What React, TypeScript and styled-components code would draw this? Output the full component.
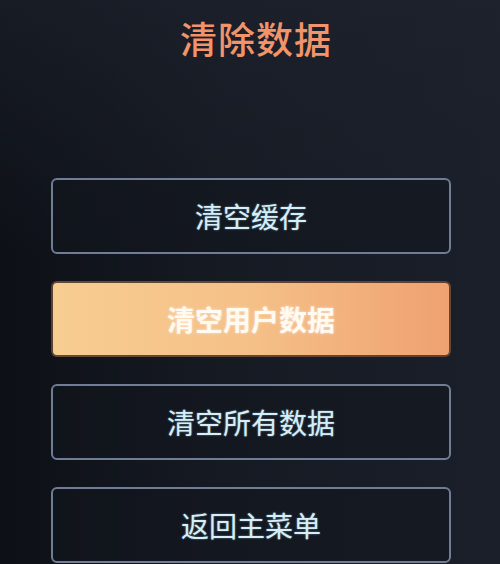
import React from 'react';
import styled, { createGlobalStyle } from 'styled-components';

const GlobalStyle = createGlobalStyle`
  html, body {
    margin: 0;
    padding: 0;
    background: #161a23;
  }
  body {
    font-family: "Noto Sans CJK SC", "Noto Sans", sans-serif;
  }
`;

const Screen = styled.div`
  width: 500px;
  height: 564px;
  overflow: hidden;
  display: flex;
  flex-direction: column;
  align-items: center;
  background:
    linear-gradient(180deg, rgba(30, 35, 46, 0.6) 0%, transparent 45%),
    linear-gradient(90deg, #0d1016 0%, #161a23 45%, #1b1f2a 100%);
`;

const Title = styled.h1`
  margin: 12px 0 0 12px;
  font-size: 37px;
  font-weight: 500;
  line-height: 52px;
  letter-spacing: 1px;
  color: #f2946a;
`;

const Menu = styled.div`
  margin-top: 114px;
  display: flex;
  flex-direction: column;
  gap: 27px;
  width: 400px;
  margin-left: 2px;
`;

const MenuButton = styled.div<{ $active?: boolean }>`
  height: 76px;
  box-sizing: border-box;
  display: flex;
  align-items: center;
  justify-content: center;
  border-radius: 6px;
  font-size: 28px;
  line-height: 1;
  border: 2px solid ${(p) => (p.$active ? 'rgba(60, 40, 30, 0.8)' : '#6f7d96')};
  background: ${(p) =>
    p.$active
      ? 'linear-gradient(90deg, #f7cd92 0%, #f5c088 50%, #efa172 100%)'
      : 'rgba(18, 22, 30, 0.55)'};
  color: ${(p) => (p.$active ? '#fffaf2' : '#d6eef7')};
  font-weight: ${(p) => (p.$active ? 700 : 400)};
  text-shadow: ${(p) => (p.$active ? '0 0 3px rgba(255, 255, 255, 0.6)' : '0 0 2px rgba(170, 225, 245, 0.6)')};
`;

const items = ['清空缓存', '清空用户数据', '清空所有数据', '返回主菜单'];

export default function App() {
  return (
    <>
      <GlobalStyle />
      <Screen>
        <Title>清除数据</Title>
        <Menu>
          {items.map((label, i) => (
            <MenuButton key={label} $active={i === 1}>
              {label}
            </MenuButton>
          ))}
        </Menu>
      </Screen>
    </>
  );
}
